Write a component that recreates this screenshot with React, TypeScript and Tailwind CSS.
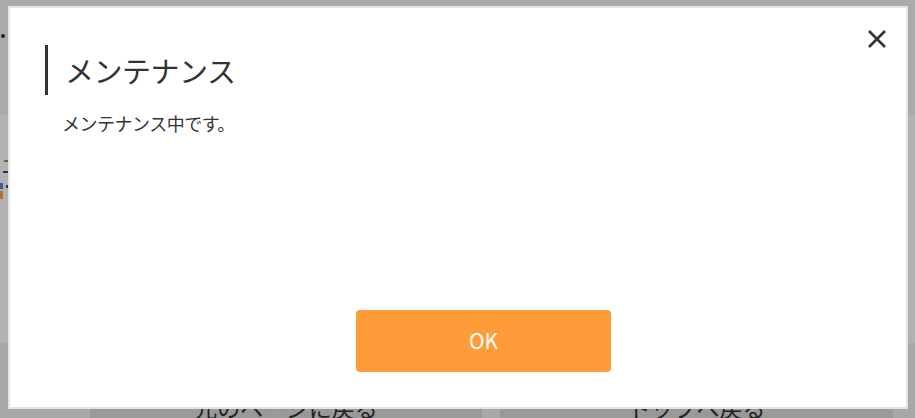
const JP = "font-['Meiryo','Noto_Sans_CJK_JP',sans-serif]";

function PageBehind() {
  return (
    <div className={`flex h-full w-full flex-col ${JP}`}>
      <div className="relative h-[115px] shrink-0 bg-[#aaaaaa]">
        <span className="absolute left-[1px] top-[34px] h-[4px] w-[4px] rounded-full bg-[#222]" />
      </div>
      <div className="relative h-[228px] shrink-0 bg-[#b2b2b2]">
        <span className="absolute left-[4px] top-[45px] h-[2px] w-[5px] bg-[#8a5a2a]" />
        <span className="absolute left-[3px] top-[56px] h-[2px] w-[6px] bg-[#333]" />
        <span className="absolute left-0 top-[68px] h-[6px] w-[3px] bg-[#3a5a9a]" />
        <span className="absolute left-0 top-[76px] h-[8px] w-[3px] bg-[#b07030]" />
        <span className="absolute left-[6px] top-[70px] h-[3px] w-[2px] bg-[#333]" />
      </div>
      <div className="flex min-h-0 flex-1 items-start overflow-hidden bg-[#a8a8a8] pl-[90px] pt-[50px]">
        <div className="flex h-[60px] w-[392px] shrink-0 justify-center bg-[#999999] pt-[3px] text-[23px] leading-none text-[#222]">
          元のページに戻る
        </div>
        <div className="ml-[18px] flex h-[60px] w-[393px] shrink-0 justify-center bg-[#999999] pt-[3px] text-[23px] leading-none text-[#222]">
          トップへ戻る
        </div>
      </div>
    </div>
  );
}

export default function App() {
  return (
    <div className="relative h-[418px] w-[915px] overflow-hidden bg-[#b2b2b2]">
      <PageBehind />

      {/* Modal */}
      <div
        className={`absolute left-[8px] top-[6px] flex h-[403px] w-[900px] flex-col border-2 border-[#e4e4e4] bg-white ${JP}`}
      >
        <button className="absolute right-[18px] top-[20px] flex h-[22px] w-[22px] items-center justify-center">
          <svg width="20" height="20" viewBox="0 0 20 20">
            <path d="M2 2 L18 18 M18 2 L2 18" stroke="#333" strokeWidth="2.6" strokeLinecap="butt" />
          </svg>
        </button>

        <div className="ml-[35px] mt-[37px] flex h-[50px] items-center border-l-[3px] border-[#333] pl-[17px]">
          <h2 className="text-[29px] leading-none tracking-[-0.5px] text-[#333]">メンテナンス</h2>
        </div>

        <p className="ml-[52px] mt-[16px] text-[18px] leading-[24px] tracking-[-0.5px] text-[#333]">
          メンテナンス中です。
        </p>

        <div className="mt-auto mb-[35px] flex justify-center pl-[51px]">
          <button className="flex h-[62px] w-[255px] items-center justify-center rounded-[4px] bg-[#ff9c3a] text-[21px] text-white">
            OK
          </button>
        </div>
      </div>
    </div>
  );
}
